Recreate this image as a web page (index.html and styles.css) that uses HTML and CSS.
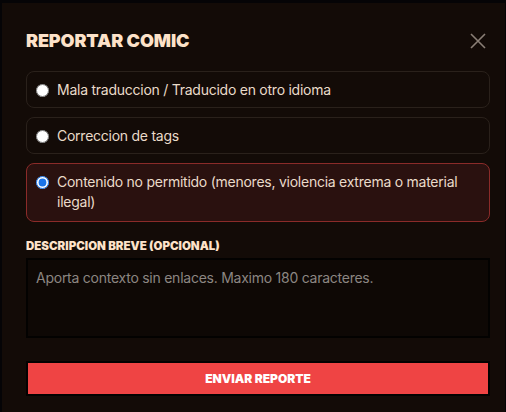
FILE: index.html
```html
<!DOCTYPE html>
<html lang="es">
<head>
    <meta charset="UTF-8">
    <meta name="viewport" content="width=device-width, initial-scale=1.0">
    <title>Reportar comic</title>
    <link rel="stylesheet" href="styles.css">
</head>
<body>

    <div class="modal">
        <div class="modal-head">
            <h2 class="modal-title">REPORTAR COMIC</h2>
            <button class="close-btn" type="button" aria-label="Cerrar">
                <svg width="16" height="16" viewBox="0 0 16 16">
                    <path d="M1 1 L15 15 M15 1 L1 15" stroke="#8a7f76" stroke-width="1.6" fill="none"/>
                </svg>
            </button>
        </div>

        <form class="report-form">
            <label class="option">
                <input type="radio" name="reason" value="traduccion">
                <span>Mala traduccion / Traducido en otro idioma</span>
            </label>
            <label class="option">
                <input type="radio" name="reason" value="tags">
                <span>Correccion de tags</span>
            </label>
            <label class="option selected">
                <input type="radio" name="reason" value="contenido" checked>
                <span>Contenido no permitido (menores, violencia extrema o material ilegal)</span>
            </label>

            <label class="field-label" for="desc">DESCRIPCION BREVE (OPCIONAL)</label>
            <textarea id="desc" class="desc" maxlength="180" placeholder="Aporta contexto sin enlaces. Maximo 180 caracteres."></textarea>

            <button type="submit" class="submit-btn">ENVIAR REPORTE</button>
        </form>
    </div>

</body>
</html>
```

FILE: styles.css
```css
/* Global Styles */
* {
    box-sizing: border-box;
    margin: 0;
    padding: 0;
}
body {
    font-family: 'Inter', 'Noto Sans', sans-serif;
    background: #050406;
    height: 100vh;
    overflow: hidden;
    padding: 3px 1px 0 2px;
    color: #eadbca;
}

/* Modal */
.modal {
    background: #130b07;
    height: 100%;
    padding: 27px 15px 0 24px;
}
.modal-head {
    display: flex;
    justify-content: space-between;
    align-items: center;
    margin-bottom: 19px;
}
.modal-title {
    font-size: 18px;
    font-weight: 900;
    color: #fde2c9;
    letter-spacing: -0.1px;
    line-height: 22px;
}
.close-btn {
    background: none;
    border: none;
    width: 16px;
    height: 16px;
    margin-right: 4px;
    cursor: pointer;
    display: flex;
}

/* Options */
.report-form {
    display: flex;
    flex-direction: column;
}
.option {
    display: flex;
    align-items: flex-start;
    gap: 8px;
    padding: 8px 12px 7px 9px;
    border: 1px solid #2a211b;
    border-radius: 8px;
    margin-bottom: 9px;
    font-size: 14px;
    line-height: 20px;
    letter-spacing: -0.25px;
    color: #eadbca;
    cursor: pointer;
}
.option input {
    width: 13px;
    height: 13px;
    margin: 4px 0 0 0;
    flex-shrink: 0;
    accent-color: #1a73e8;
}
.option.selected {
    background: #2a110f;
    border-color: #8b2b29;
    padding-bottom: 9px;
}

/* Description */
.field-label {
    margin-top: 8px;
    font-size: 11.5px;
    font-weight: 900;
    color: #fde2c9;
    line-height: 14px;
    margin-bottom: 5px;
}
.desc {
    height: 80px;
    background: #0e0805;
    border: 2px solid #030201;
    resize: none;
    padding: 9px 8px;
    font-family: 'Inter', 'Noto Sans', sans-serif;
    font-size: 14px;
    line-height: 18px;
    letter-spacing: -0.25px;
    color: #eadbca;
}
.desc::placeholder {
    color: #8c8682;
}

/* Submit */
.submit-btn {
    margin-top: 23px;
    height: 35px;
    background: #ef4444;
    border: 2px solid #030201;
    color: #fff;
    font-family: 'Inter', 'Noto Sans', sans-serif;
    font-size: 12px;
    font-weight: 900;
    cursor: pointer;
}
```
